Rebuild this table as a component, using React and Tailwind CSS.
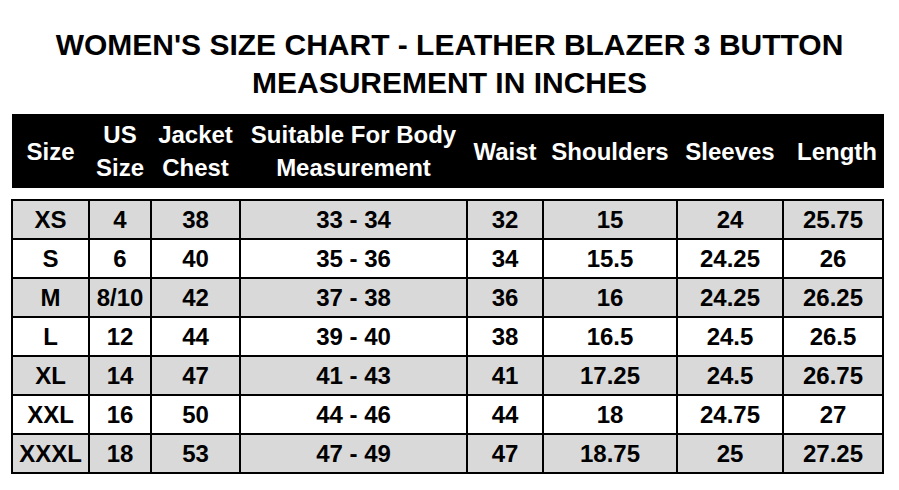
import React from "react";

const cols = [77, 62, 89, 227, 76, 134, 106, 100];

const headers = [
  ["Size"],
  ["US", "Size"],
  ["Jacket", "Chest"],
  ["Suitable For Body", "Measurement"],
  ["Waist"],
  ["Shoulders"],
  ["Sleeves"],
  ["Length"],
];

const rows = [
  ["XS", "4", "38", "33 - 34", "32", "15", "24", "25.75"],
  ["S", "6", "40", "35 - 36", "34", "15.5", "24.25", "26"],
  ["M", "8/10", "42", "37 - 38", "36", "16", "24.25", "26.25"],
  ["L", "12", "44", "39 - 40", "38", "16.5", "24.5", "26.5"],
  ["XL", "14", "47", "41 - 43", "41", "17.25", "24.5", "26.75"],
  ["XXL", "16", "50", "44 - 46", "44", "18", "24.75", "27"],
  ["XXXL", "18", "53", "47 - 49", "47", "18.75", "25", "27.25"],
];

export default function App() {
  return (
    <div
      className="w-[899px] h-[490px] bg-white text-black overflow-hidden"
      style={{ fontFamily: '"Liberation Sans", Arial, sans-serif' }}
    >
      <div className="pt-[26px] text-center font-bold text-[30px] leading-[38px]">
        <div>WOMEN'S SIZE CHART - LEATHER BLAZER 3 BUTTON</div>
        <div>MEASUREMENT IN INCHES</div>
      </div>
      <div className="ml-[12px] mt-[12px] flex w-[872px] h-[74px] bg-black text-white font-bold text-[24px] leading-[33px]">
        {headers.map((h, i) => (
          <div
            key={i}
            className={
              i === 7
                ? "flex flex-col items-center justify-center text-center pl-[8px]"
                : "flex flex-col items-center justify-center text-center"
            }
            style={{ width: cols[i] }}
          >
            {h.map((l, j) => (
              <div key={j} className="whitespace-nowrap">{l}</div>
            ))}
          </div>
        ))}
      </div>
      <table className="ml-[11px] mt-[11px] border-collapse table-fixed font-bold text-[24px]">
        <colgroup>
          {cols.map((w, i) => (
            <col key={i} style={{ width: w }} />
          ))}
        </colgroup>
        <tbody>
          {rows.map((r, i) => (
            <tr key={i} className={i % 2 === 0 ? "bg-[#d9d9d9]" : "bg-white"}>
              {r.map((c, j) => (
                <td
                  key={j}
                  className="border-2 border-black h-[39px] p-0 text-center align-middle leading-none whitespace-nowrap"
                >
                  {c}
                </td>
              ))}
            </tr>
          ))}
        </tbody>
      </table>
    </div>
  );
}
